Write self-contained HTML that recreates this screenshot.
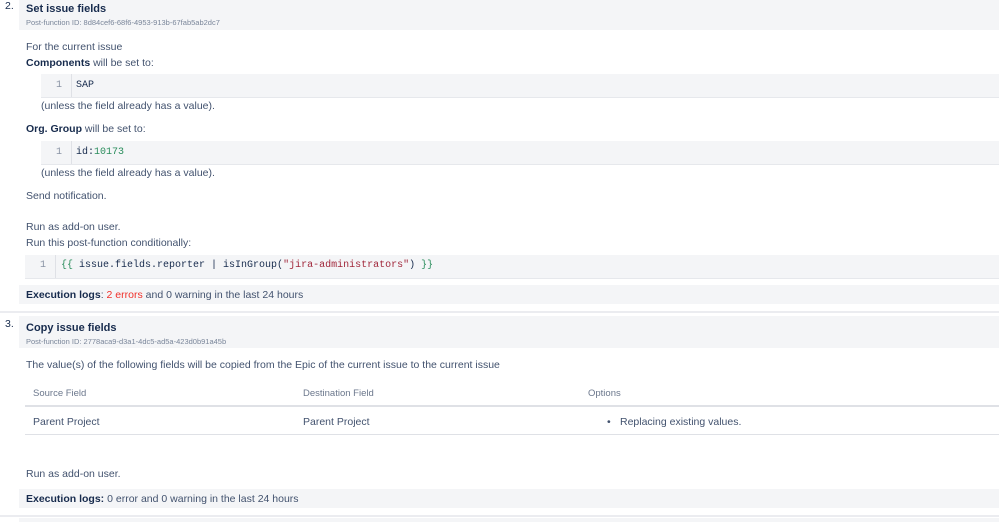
<!DOCTYPE html>
<html><head><meta charset="utf-8"><style>
body{margin:0;width:999px;height:522px;background:#fff;position:relative;overflow:hidden;font-family:"Liberation Sans",sans-serif;font-size:10.5px;color:#42526e}
.a{position:absolute;white-space:nowrap;line-height:12px}
.box{position:absolute;background:#f4f5f7}
b{color:#172b4d}
.m{font-family:"Liberation Mono",monospace;font-size:10px;color:#172b4d}
.ln{font-family:"Liberation Mono",monospace;font-size:10px;color:#8993a4}
.g{position:absolute;width:1px;background:#dfe1e6}
.sm{font-size:7.5px;color:#7a869a}
.hl{position:absolute;background:#ebecf0;left:0;width:999px}
</style></head><body>
<div class="a" style="left:5px;top:0px;color:#172b4d">2.</div>
<div class="box" style="left:19px;top:0;width:980px;height:30px"></div>
<div class="a" style="left:26px;top:3px;font-size:11px"><b>Set issue fields</b></div>
<div class="a sm" style="left:26px;top:17px">Post-function ID: 8d84cef6-68f6-4953-913b-67fab5ab2dc7</div>
<div class="a" style="left:26px;top:41px">For the current issue</div>
<div class="a" style="left:26px;top:57px"><b>Components</b> will be set to:</div>
<div class="box" style="left:41px;top:74px;width:958px;height:23px;border-bottom:1px solid #e6e8ec"></div>
<div class="g" style="left:71px;top:74px;height:23px"></div>
<div class="a ln" style="left:56px;top:80px">1</div>
<div class="a m" style="left:76px;top:80px">SAP</div>
<div class="a" style="left:41px;top:100px">(unless the field already has a value).</div>
<div class="a" style="left:26px;top:123px"><b>Org. Group</b> will be set to:</div>
<div class="box" style="left:41px;top:141px;width:958px;height:23px;border-bottom:1px solid #e6e8ec"></div>
<div class="g" style="left:71px;top:141px;height:23px"></div>
<div class="a ln" style="left:56px;top:147px">1</div>
<div class="a m" style="left:76px;top:147px">id:<span style="color:#2a8d5c">10173</span></div>
<div class="a" style="left:41px;top:167px">(unless the field already has a value).</div>
<div class="a" style="left:26px;top:190px">Send notification.</div>
<div class="a" style="left:26px;top:221px">Run as add-on user.</div>
<div class="a" style="left:26px;top:237px">Run this post-function conditionally:</div>
<div class="box" style="left:25px;top:255px;width:974px;height:23px;border-bottom:1px solid #e6e8ec"></div>
<div class="g" style="left:55px;top:255px;height:23px"></div>
<div class="a ln" style="left:40px;top:260px">1</div>
<div class="a m" style="left:61px;top:260px"><span style="color:#2a8d5c">{{</span> issue.fields.reporter | isInGroup(<span style="color:#a1283b">"jira-administrators"</span>) <span style="color:#2a8d5c">}}</span></div>
<div class="box" style="left:19px;top:285px;width:980px;height:19px"></div>
<div class="a" style="left:26px;top:289px"><b>Execution logs</b>: <span style="color:#f0302a">2 errors</span> and 0 warning in the last 24 hours</div>
<div class="hl" style="top:311px;height:2px"></div>
<div class="a" style="left:5px;top:318px;color:#172b4d">3.</div>
<div class="box" style="left:19px;top:316px;width:980px;height:32px"></div>
<div class="a" style="left:26px;top:322px;font-size:11px"><b>Copy issue fields</b></div>
<div class="a sm" style="left:26px;top:336px">Post-function ID: 2778aca9-d3a1-4dc5-ad5a-423d0b91a45b</div>
<div class="a" style="left:26px;top:359px">The value(s) of the following fields will be copied from the Epic of the current issue to the current issue</div>
<div class="a" style="left:33px;top:388px;font-size:9.5px;color:#6b778c">Source Field</div>
<div class="a" style="left:303px;top:388px;font-size:9.5px;color:#6b778c">Destination Field</div>
<div class="a" style="left:588px;top:388px;font-size:9.5px;color:#6b778c">Options</div>
<div class="hl" style="left:25px;top:405px;height:2px;width:974px;background:#dfe1e6"></div>
<div class="a" style="left:33px;top:416px">Parent Project</div>
<div class="a" style="left:303px;top:416px">Parent Project</div>
<div class="a" style="left:607px;top:416px">•</div>
<div class="a" style="left:620px;top:416px">Replacing existing values.</div>
<div class="hl" style="left:25px;top:434px;height:1px;width:974px;background:#dfe1e6"></div>
<div class="a" style="left:26px;top:468px">Run as add-on user.</div>
<div class="box" style="left:19px;top:489px;width:980px;height:19px"></div>
<div class="a" style="left:26px;top:493px"><b>Execution logs:</b> 0 error and 0 warning in the last 24 hours</div>
<div class="hl" style="top:515px;height:2px"></div>
<div class="box" style="left:19px;top:518px;width:980px;height:4px"></div>
</body></html>
